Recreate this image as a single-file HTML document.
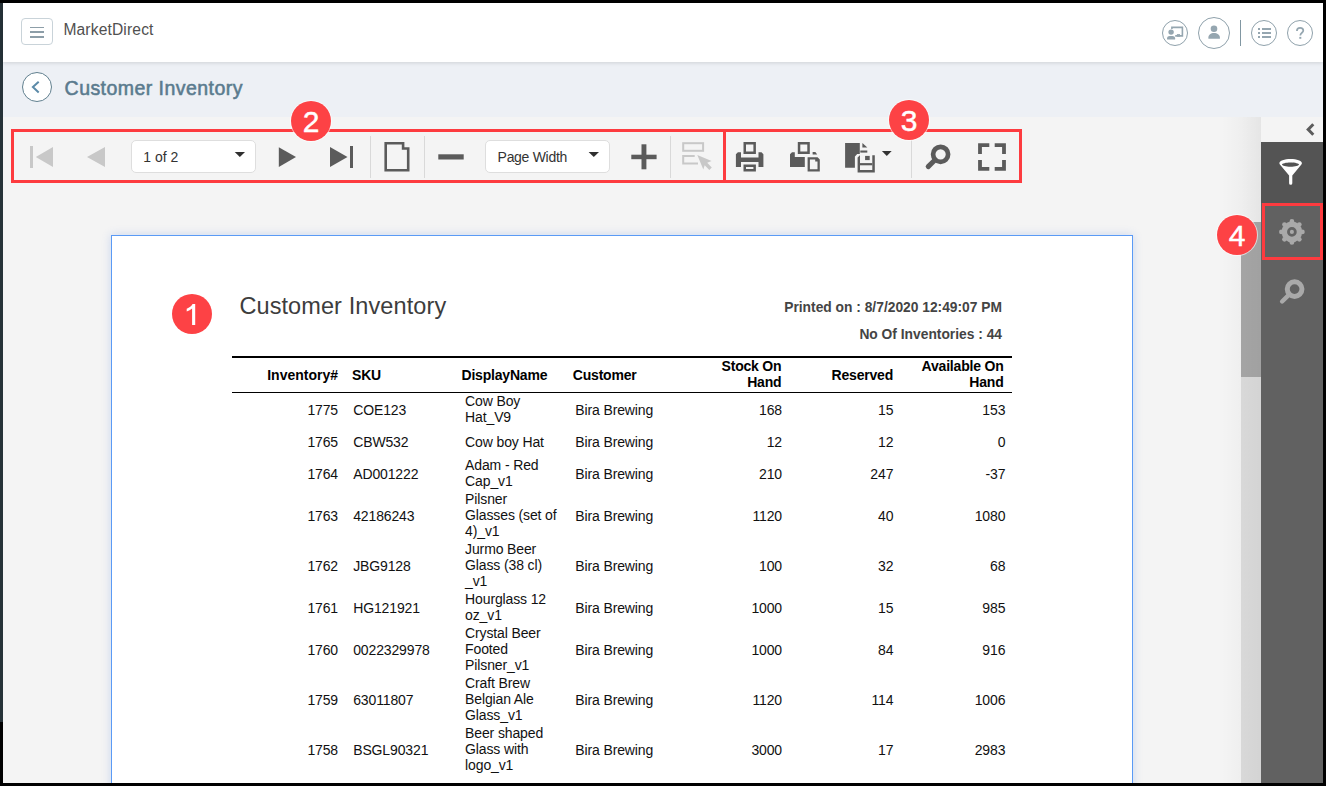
<!DOCTYPE html>
<html><head><meta charset="utf-8">
<title>Customer Inventory</title>
<style>
*{box-sizing:border-box;margin:0;padding:0}
html,body{width:1326px;height:786px;overflow:hidden;background:#000;font-family:"Liberation Sans",sans-serif}
.a{position:absolute}
.t{position:absolute;white-space:nowrap;line-height:1}
.c{position:absolute;white-space:nowrap;font-size:14px;line-height:16px;color:#111;letter-spacing:-0.13px}
.r{text-align:right}
.hb{position:absolute;white-space:nowrap;font-size:14px;font-weight:bold;color:#000;text-align:right;letter-spacing:-0.2px}
.badge{position:absolute;width:40px;height:40px;border-radius:50%;background:#fd4245;color:#fff;font-size:30px;text-align:center;line-height:42px;-webkit-text-stroke:0.45px #fff;box-shadow:0 0 0 1px rgba(255,255,255,0.6)}
.rbox{position:absolute;border:3px solid #fd3b3f}
.sep{position:absolute;width:1px;background:#d9d9d9}
.dd{position:absolute;background:#fff;border:1px solid #dedede;border-radius:5px}
svg{position:absolute;left:0;top:0;overflow:visible}
</style></head><body>
<!-- frame -->
<div class="a" style="left:0;top:3px;width:3px;height:719px;background:#263238"></div>
<div class="a" style="left:3px;top:3px;width:1320px;height:780px;background:#f4f4f4"></div>
<!-- band -->
<div class="a" style="left:3px;top:62px;width:1320px;height:55px;background:#edf0f5"></div>
<!-- header -->
<div class="a" style="left:3px;top:3px;width:1320px;height:59px;background:#fff;box-shadow:0 1px 4px rgba(0,0,0,0.13)"></div>
<div class="a" style="left:21px;top:18px;width:32px;height:27px;border:1px solid #c9d3d9;border-radius:4px;background:#fff"></div>
<div class="a" style="left:30.4px;top:26.6px;width:13.5px;height:1.7px;background:#8d9ea8"></div>
<div class="a" style="left:30.4px;top:31.3px;width:13.5px;height:1.7px;background:#8d9ea8"></div>
<div class="a" style="left:30.4px;top:36px;width:13.5px;height:1.7px;background:#8d9ea8"></div>
<div class="t" style="left:63.4px;top:21.5px;font-size:15.6px;letter-spacing:0.15px;color:#505050">MarketDirect</div>

<!-- back + title -->
<div class="a" style="left:22px;top:72px;width:30px;height:30px;border:1px solid #61808f;border-radius:50%;background:#fff"></div>
<div class="t" style="left:64.6px;top:78.6px;font-size:19.5px;letter-spacing:0.45px;-webkit-text-stroke:0.55px #5a7b8e;color:#5a7b8e">Customer Inventory</div>

<!-- toolbar dropdowns -->
<div class="dd" style="left:131px;top:140px;width:125px;height:33px"></div>
<div class="t" style="left:143.3px;top:150.15px;font-size:14px;color:#333">1 of 2</div>
<div class="dd" style="left:485px;top:140px;width:125px;height:33px"></div>
<div class="t" style="left:497.6px;top:150.15px;font-size:14px;letter-spacing:-0.3px;color:#333">Page Width</div>
<div class="sep" style="left:370px;top:136px;height:42px"></div>
<div class="sep" style="left:424px;top:136px;height:42px"></div>
<div class="sep" style="left:670px;top:136px;height:42px"></div>
<div class="sep" style="left:911px;top:140px;height:38px"></div>

<!-- scrollbar + sidebar -->
<div class="a" style="left:1241px;top:117px;width:20px;height:666px;background:linear-gradient(90deg,rgba(0,0,0,0) 0,rgba(0,0,0,0.02) 100%)"></div>
<div class="a" style="left:1241px;top:377px;width:20px;height:406px;background:#dddddd"></div>
<div class="a" style="left:1241px;top:222px;width:20px;height:155px;background:#a8a8a8"></div>
<div class="a" style="left:1261px;top:117px;width:62px;height:666px;background:#616161"></div>
<div class="a" style="left:1221px;top:117px;width:40px;height:666px;background:linear-gradient(90deg,rgba(0,0,0,0),rgba(0,0,0,0.045))"></div>
<div class="a" style="left:1261px;top:117px;width:62px;height:25px;background:#f4f4f4"></div>
<div class="a" style="left:1261px;top:142px;width:62px;height:61px;background:#545454"></div>

<!-- report page -->
<div class="a" style="left:111px;top:235px;width:1022px;height:600px;background:#fff;border:1px solid #5a9af5;box-shadow:0 0 9px rgba(60,110,220,0.22)"></div>
<div class="t" style="left:239.4px;top:295.2px;font-size:23.5px;letter-spacing:0.1px;color:#3d3d3d">Customer Inventory</div>
<div class="t" style="right:324px;top:301.2px;font-size:13.8px;font-weight:bold;color:#444">Printed on : 8/7/2020 12:49:07 PM</div>
<div class="t" style="right:324px;top:328.3px;font-size:13.8px;font-weight:bold;color:#444">No Of Inventories : 44</div>
<div class="a" style="left:232px;top:356px;width:780px;height:2px;background:#000"></div>
<div class="a" style="left:232px;top:392px;width:780px;height:1px;background:#000"></div>
<div class="hb" style="right:988px;top:368.15px;line-height:14px;letter-spacing:0">Inventory#</div>
<div class="hb" style="left:352px;top:368.15px;line-height:14px;text-align:left">SKU</div>
<div class="hb" style="left:461.5px;top:368.15px;line-height:14px;text-align:left">DisplayName</div>
<div class="hb" style="left:572.8px;top:368.15px;line-height:14px;text-align:left">Customer</div>
<div class="hb" style="right:544.6px;top:357.85px;line-height:16.2px">Stock On<br>Hand</div>
<div class="hb" style="right:433px;top:368.15px;line-height:14px">Reserved</div>
<div class="hb" style="right:322.5px;top:357.85px;line-height:16.2px">Available On<br>Hand</div>
<div class="c r" style="right:988px;top:402.15px">1775</div>
<div class="c" style="left:353.2px;top:402.15px">COE123</div>
<div class="c" style="left:465.1px;top:393.15px">Cow Boy<br>Hat_V9</div>
<div class="c" style="left:575.3px;top:402.15px">Bira Brewing</div>
<div class="c r" style="right:544px;top:402.15px">168</div>
<div class="c r" style="right:432.70000000000005px;top:402.15px">15</div>
<div class="c r" style="right:320.70000000000005px;top:402.15px">153</div>
<div class="c r" style="right:988px;top:434.15px">1765</div>
<div class="c" style="left:353.2px;top:434.15px">CBW532</div>
<div class="c" style="left:465.1px;top:434.15px">Cow boy Hat</div>
<div class="c" style="left:575.3px;top:434.15px">Bira Brewing</div>
<div class="c r" style="right:544px;top:434.15px">12</div>
<div class="c r" style="right:432.70000000000005px;top:434.15px">12</div>
<div class="c r" style="right:320.70000000000005px;top:434.15px">0</div>
<div class="c r" style="right:988px;top:466.15px">1764</div>
<div class="c" style="left:353.2px;top:466.15px">AD001222</div>
<div class="c" style="left:465.1px;top:457.15px">Adam - Red<br>Cap_v1</div>
<div class="c" style="left:575.3px;top:466.15px">Bira Brewing</div>
<div class="c r" style="right:544px;top:466.15px">210</div>
<div class="c r" style="right:432.70000000000005px;top:466.15px">247</div>
<div class="c r" style="right:320.70000000000005px;top:466.15px">-37</div>
<div class="c r" style="right:988px;top:508.15px">1763</div>
<div class="c" style="left:353.2px;top:508.15px">42186243</div>
<div class="c" style="left:465.1px;top:491.15px">Pilsner<br>Glasses (set of<br>4)_v1</div>
<div class="c" style="left:575.3px;top:508.15px">Bira Brewing</div>
<div class="c r" style="right:544px;top:508.15px">1120</div>
<div class="c r" style="right:432.70000000000005px;top:508.15px">40</div>
<div class="c r" style="right:320.70000000000005px;top:508.15px">1080</div>
<div class="c r" style="right:988px;top:558.15px">1762</div>
<div class="c" style="left:353.2px;top:558.15px">JBG9128</div>
<div class="c" style="left:465.1px;top:541.15px">Jurmo Beer<br>Glass (38 cl)<br>_v1</div>
<div class="c" style="left:575.3px;top:558.15px">Bira Brewing</div>
<div class="c r" style="right:544px;top:558.15px">100</div>
<div class="c r" style="right:432.70000000000005px;top:558.15px">32</div>
<div class="c r" style="right:320.70000000000005px;top:558.15px">68</div>
<div class="c r" style="right:988px;top:600.15px">1761</div>
<div class="c" style="left:353.2px;top:600.15px">HG121921</div>
<div class="c" style="left:465.1px;top:591.15px">Hourglass 12<br>oz_v1</div>
<div class="c" style="left:575.3px;top:600.15px">Bira Brewing</div>
<div class="c r" style="right:544px;top:600.15px">1000</div>
<div class="c r" style="right:432.70000000000005px;top:600.15px">15</div>
<div class="c r" style="right:320.70000000000005px;top:600.15px">985</div>
<div class="c r" style="right:988px;top:642.15px">1760</div>
<div class="c" style="left:353.2px;top:642.15px">0022329978</div>
<div class="c" style="left:465.1px;top:625.15px">Crystal Beer<br>Footed<br>Pilsner_v1</div>
<div class="c" style="left:575.3px;top:642.15px">Bira Brewing</div>
<div class="c r" style="right:544px;top:642.15px">1000</div>
<div class="c r" style="right:432.70000000000005px;top:642.15px">84</div>
<div class="c r" style="right:320.70000000000005px;top:642.15px">916</div>
<div class="c r" style="right:988px;top:692.15px">1759</div>
<div class="c" style="left:353.2px;top:692.15px">63011807</div>
<div class="c" style="left:465.1px;top:675.15px">Craft Brew<br>Belgian Ale<br>Glass_v1</div>
<div class="c" style="left:575.3px;top:692.15px">Bira Brewing</div>
<div class="c r" style="right:544px;top:692.15px">1120</div>
<div class="c r" style="right:432.70000000000005px;top:692.15px">114</div>
<div class="c r" style="right:320.70000000000005px;top:692.15px">1006</div>
<div class="c r" style="right:988px;top:742.15px">1758</div>
<div class="c" style="left:353.2px;top:742.15px">BSGL90321</div>
<div class="c" style="left:465.1px;top:725.15px">Beer shaped<br>Glass with<br>logo_v1</div>
<div class="c" style="left:575.3px;top:742.15px">Bira Brewing</div>
<div class="c r" style="right:544px;top:742.15px">3000</div>
<div class="c r" style="right:432.70000000000005px;top:742.15px">17</div>
<div class="c r" style="right:320.70000000000005px;top:742.15px">2983</div>

<!-- icons overlay -->
<svg width="1326" height="786" viewBox="0 0 1326 786">
  <!-- header icons -->
  <g fill="#fff" stroke="#8fa1ab" stroke-width="1">
    <circle cx="1175" cy="33" r="12.5"/>
    <circle cx="1214" cy="33" r="15.5"/>
    <circle cx="1264" cy="33" r="12.5"/>
    <circle cx="1300" cy="33" r="12.5"/>
  </g>
  <rect x="1240" y="20" width="1" height="26" fill="#8197a2"/>
  <g fill="#95a6b0">
    <!-- presenter -->
    <path d="M1171.1 26.6H1183.2V36.7H1175.2V35.1H1181.6V28.2H1172.7V29H1171.1Z"/>
    <rect x="1176.9" y="34.1" width="3.1" height="2.6"/>
    <circle cx="1171.1" cy="32.1" r="2.7"/>
    <path d="M1167.1 39.6V38.2C1167.1 36.8 1168.3 36 1169.7 36H1172.5C1173.9 36 1175.1 36.8 1175.1 38.2V39.6Z"/>
    <!-- user -->
    <circle cx="1214" cy="28.8" r="3.3"/>
    <path d="M1208.4 38.8v-1.2c0-2.6 2.4-4.5 5.6-4.5s5.9 1.9 5.9 4.5v1.2z"/>
    <!-- list -->
    <rect x="1258" y="28" width="2" height="2"/><rect x="1262" y="28" width="9" height="2"/>
    <rect x="1258" y="32" width="2" height="2"/><rect x="1262" y="32" width="9" height="2"/>
    <rect x="1258" y="36" width="2" height="2"/><rect x="1262" y="36" width="9" height="2"/>
  </g>
  <path d="M1296.9 30.9C1296.9 29 1298.3 27.9 1300.1 27.9C1301.9 27.9 1303.3 29 1303.3 30.7C1303.3 32.6 1300.3 33 1300.3 35.4" fill="none" stroke="#95a6b0" stroke-width="1.7"/><rect x="1299.3" y="36.9" width="2" height="1.9" fill="#95a6b0"/>
  <!-- hamburger handled in html; back chevron -->
  <path d="M38.7 81.7L32.9 87.1L38.7 92.5" fill="none" stroke="#5b8aa8" stroke-width="2"/>

  <!-- toolbar: nav -->
  <g fill="#c8c8c8">
    <rect x="30" y="146" width="3" height="22"/>
    <path d="M35.8 157L53 147V167z"/>
    <path d="M87 157L105 147V167z"/>
  </g>
  <g fill="#5b5b5b">
    <path d="M278.8 147.3L296 157L278.8 167z"/>
    <path d="M330 147L347.5 157L330 167z"/>
    <rect x="350" y="146" width="3" height="22"/>
  </g>
  <path d="M234.7 152H245L239.85 157z" fill="#2f2f2f"/>
  <path d="M588.6 152H599L593.8 157z" fill="#2f2f2f"/>
  <!-- single page -->
  <path d="M385.7 143.3H403.1V148.5H408.2V170.3H385.7Z" fill="none" stroke="#5b5b5b" stroke-width="2.6"/>
  <!-- minus / plus -->
  <rect x="438.3" y="154.3" width="25.4" height="5.2" fill="#5b5b5b"/>
  <rect x="631.3" y="154.7" width="25.3" height="4.5" fill="#5b5b5b"/>
  <rect x="641.5" y="144.3" width="4.9" height="25" fill="#5b5b5b"/>
  <!-- selection (disabled) -->
  <g fill="none" stroke="#c8c8c8" stroke-width="2">
    <rect x="683.2" y="143.2" width="19.9" height="7.6"/>
    <path d="M694.7 155.9H683.2V163.5H698"/>
  </g>
  <path d="M697.3 155L711.6 161L707.2 162.8L711.8 167.4L709.3 169.9L704.7 165.3L703.3 169.5Z" fill="#c8c8c8"/>
  <!-- print -->
  <g fill="#5b5b5b">
    <path d="M743.5 142h12.4v12.1h-12.4zM746 144.5v7.1h7.4v-7.1z" fill-rule="evenodd"/>
    <path d="M735.9 154.2l2-2h3.1v5.3h17.5v-5.3h3l1.9 2v12.7h-4.9v-5h-17.5v5h-5.1z"/>
    <path d="M743.5 164.5h12.4v7.1h-12.4zM746 167v2.1h7.4v-2.1z" fill-rule="evenodd"/>
  </g>
  <!-- print to file -->
  <g fill="#5b5b5b">
    <path d="M797.8 142h12v12.1h-12zM800.3 144.5v7.1h7v-7.1z" fill-rule="evenodd"/>
    <path d="M790 154.2l2-2h2.8v4.9h10v9.8h-14.8z"/>
    <path d="M812.6 152H815.4L817.2 154.4H812.6Z"/>
    <path d="M807.6 157.3H817.6L819.8 159.5V171.6H807.6ZM809.9 159.6V169.3H817.5V161.6H815.2V159.6Z" fill-rule="evenodd"/>
  </g>
  <!-- export -->
  <g fill="#5b5b5b">
    <path d="M845.1 143.1H859.8V154.1H857.2L854.9 156.4V167.7H845.1Z"/>
    <path d="M862.4 143.1L867.3 147.5H862.4Z"/>
    <rect x="860.3" y="150.5" width="7" height="2.1"/>
    <path d="M857.6 157.5L859.9 155.3H860V170H872.3V155.3H874.8V172.5H857.6Z"/>
    <rect x="860" y="163.1" width="12.3" height="2.2"/>
    <rect x="865.1" y="155.9" width="4.6" height="4.2"/>
  </g>
  <path d="M881.9 151H891.7L886.8 155.9z" fill="#333"/>
  <!-- search -->
  <circle cx="940.6" cy="154.3" r="7.5" fill="none" stroke="#5b5b5b" stroke-width="4.7"/>
  <path d="M934.4 160.5L928.2 166.6" stroke="#5b5b5b" stroke-width="5" stroke-linecap="round"/>
  <!-- fullscreen -->
  <g fill="#5b5b5b">
    <path d="M978.1 143.2H989.3V147H981.9V154.1H978.1Z"/>
    <path d="M1005.9 143.2H994.7V147H1002.1V154.1H1005.9Z"/>
    <path d="M978.1 170.8H989.3V167H981.9V159.9H978.1Z"/>
    <path d="M1005.9 170.8H994.7V167H1002.1V159.9H1005.9Z"/>
  </g>

  <!-- sidebar -->
  <path d="M1313.3 124.3L1308.2 129.5L1313.3 134.7" fill="none" stroke="#5c5c5c" stroke-width="3"/>
  <g fill="#fff">
    <path d="M1279.4 163.2C1279.4 160.6 1284.4 158.9 1290.6 158.9C1296.8 158.9 1301.9 160.6 1301.9 163.2C1301.9 163.8 1301.6 164.3 1301.2 164.7L1292.3 175.5V183.2A1.6 1.6 0 0 1 1289.1 183.2V175.5L1280.1 164.7C1279.6 164.3 1279.4 163.8 1279.4 163.2ZM1282 164.5C1282 165.6 1285.8 166.7 1290.5 166.7C1295.2 166.7 1299 165.6 1299 164.5C1299 163.4 1295.2 162.4 1290.5 162.4C1285.8 162.4 1282 163.4 1282 164.5Z" fill-rule="evenodd"/>
  </g>
  <g fill="#a9a9a9">
    <circle cx="1291.9" cy="231.9" r="10.3"/><circle cx="1291.90" cy="221.40" r="2.35"/><circle cx="1299.32" cy="224.48" r="2.35"/><circle cx="1302.40" cy="231.90" r="2.35"/><circle cx="1299.32" cy="239.32" r="2.35"/><circle cx="1291.90" cy="242.40" r="2.35"/><circle cx="1284.48" cy="239.32" r="2.35"/><circle cx="1281.40" cy="231.90" r="2.35"/><circle cx="1284.48" cy="224.48" r="2.35"/><circle cx="1291.9" cy="231.9" r="3.45" fill="none" stroke="#636363" stroke-width="2.8"/>
  </g>
  <circle cx="1294.6" cy="289.1" r="7.35" fill="none" stroke="#a9a9a9" stroke-width="5"/>
  <path d="M1288.6 295.1L1282.1 301.5" stroke="#a9a9a9" stroke-width="4.4" stroke-linecap="round"/>
</svg>

<!-- annotation boxes -->
<div class="rbox" style="left:11px;top:129px;width:715px;height:54px"></div>
<div class="rbox" style="left:723px;top:129px;width:299px;height:54px"></div>
<div class="rbox" style="left:1262px;top:203px;width:61px;height:57px"></div>
<div class="badge" style="left:291px;top:101px">2</div>
<div class="badge" style="left:889px;top:100px">3</div>
<div class="badge" style="left:1217px;top:215px">4</div>
<div class="badge" style="left:172px;top:294px"></div>
<svg width="1326" height="786" style="z-index:30"><path d="M195.2 304V325.1H192.1V308.4C190.6 309.8 188.8 310.9 186.7 311.6V308.7C189.4 307.6 191.5 305.9 192.6 304Z" fill="#fff"/></svg>

<!-- frame on top -->
<div class="a" style="left:0;top:0;width:1326px;height:3px;background:#000"></div>
<div class="a" style="left:1323px;top:0;width:3px;height:786px;background:#000"></div>
<div class="a" style="left:0;top:783px;width:1326px;height:3px;background:#000"></div>
<div class="a" style="left:0;top:722px;width:3px;height:64px;background:#000"></div>
</body></html>
